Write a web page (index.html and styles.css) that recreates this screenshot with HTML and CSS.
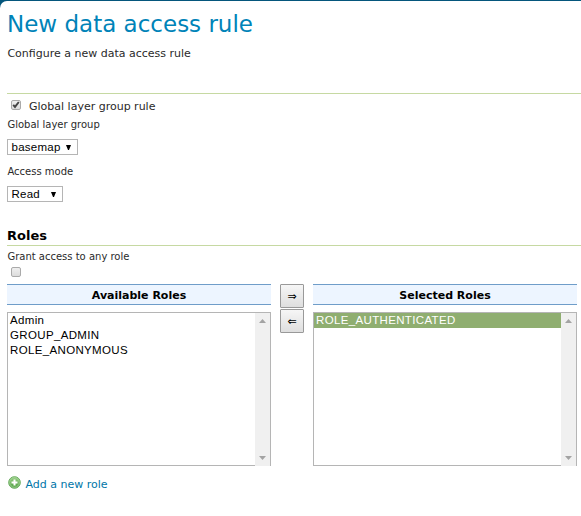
FILE: index.html
```html
<!DOCTYPE html>
<html lang="en">
<head>
<meta charset="utf-8">
<title>New data access rule</title>
<link rel="stylesheet" href="styles.css">
</head>
<body>
<main class="page">
  <header class="page-header">
    <h1>New data access rule</h1>
    <p>Configure a new data access rule</p>
  </header>
  <form class="rule-form">
    <label class="check-row">
      <span class="checkbox"><svg width="10" height="10" viewBox="0 0 10 10"><path d="M2.2 4.8 4 6.9 7.8 2" fill="none" stroke="#444" stroke-width="1.9"/></svg></span>
      <span class="check-text">Global layer group rule</span>
    </label>
    <div class="label">Global layer group</div>
    <div class="select basemap"><span>basemap</span><svg width="5" height="5" viewBox="0 0 5 5"><path d="M0 0h5L3 5H2z"/></svg></div>
    <div class="label">Access mode</div>
    <div class="select mode"><span>Read</span><svg width="5" height="5" viewBox="0 0 5 5"><path d="M0 0h5L3 5H2z"/></svg></div>
    <h2>Roles</h2>
    <div class="label grant">Grant access to any role</div>
    <span class="checkbox any-role"></span>
    <div class="palette">
      <section class="roles">
        <h3>Available Roles</h3>
        <div class="listbox">
          <ul><li>Admin</li><li>GROUP_ADMIN</li><li>ROLE_ANONYMOUS</li></ul>
          <div class="scrollbar"><svg width="7" height="4" viewBox="0 0 7 4"><path d="M0 4 3.5 0 7 4z"/></svg><svg width="7" height="4" viewBox="0 0 7 4"><path d="M0 0h7L3.5 4z"/></svg></div>
        </div>
      </section>
      <div class="movers"><button type="button">⇒</button><button type="button">⇐</button></div>
      <section class="roles">
        <h3>Selected Roles</h3>
        <div class="listbox">
          <ul><li class="selected">ROLE_AUTHENTICATED</li></ul>
          <div class="scrollbar"><svg width="7" height="4" viewBox="0 0 7 4"><path d="M0 4 3.5 0 7 4z"/></svg><svg width="7" height="4" viewBox="0 0 7 4"><path d="M0 0h7L3.5 4z"/></svg></div>
        </div>
      </section>
    </div>
    <a class="add-role"><svg width="13" height="13" viewBox="0 0 13 13"><defs><linearGradient id="g" x2="0" y2="1"><stop stop-color="#9bd086"/><stop offset="1" stop-color="#4d9c40"/></linearGradient></defs><circle cx="6.5" cy="6.5" r="5.8" fill="url(#g)" stroke="#65a95a"/><circle cx="6.5" cy="6.5" r="4.8" fill="none" stroke="#a6d79a" stroke-width=".8"/><path d="M6.5 3.5v6M3.5 6.5h6" stroke="#fff" stroke-width="2"/></svg><span>Add a new role</span></a>
  </form>
</main>
</body>
</html>
```
FILE: styles.css
```css
* { box-sizing: border-box; }
body {
  margin: 0;
  background: #04567c;
  color: #2a2a2a;
  font: 11px/16px "DejaVu Sans", sans-serif;
}
.page {
  margin-top: 1px;
  height: 515px;
  padding-left: 7px;
  background: #fff;
  border-top-left-radius: 7px;
  overflow: hidden;
}
.page-header { height: 93px; border-bottom: 1px solid #c6d9a2; }
h1 {
  margin: 0;
  padding-top: 7px;
  color: #0083b8;
  font-size: 23px;
  font-weight: 400;
  line-height: 32px;
}
p { margin: 6px 0 0; padding-left: .4px; }
.check-row { display: flex; height: 23px; padding: 4px 0 3px; }
.checkbox {
  display: block;
  width: 10px;
  height: 10px;
  margin: 2px 0 0 4px;
  border: 1px solid #aaa;
  border-radius: 2px;
  background: linear-gradient(#efefef, #dcdcdc);
}
.checkbox svg { display: block; margin: -1px; }
.check-text { margin: 1px 0 0 8px; }
.label { padding-left: .4px; font-size: 10px; line-height: 16px; }
.select {
  display: flex;
  align-items: center;
  justify-content: space-between;
  height: 16px;
  padding: 0 6px 0 3.5px;
  border: 1px solid #b5b5b5;
  color: #000;
  font: 11.5px/14px "Liberation Sans", sans-serif;
  letter-spacing: .25px;
}
.basemap { width: 71px; margin: 6px 0 9px; }
.mode { width: 56px; margin: 6px 0 24px; }
h2 {
  margin: 0;
  height: 20px;
  border-bottom: 1px solid #c6d9a2;
  color: #000;
  font-size: 13px;
  line-height: 20px;
}
.grant { margin-top: 3px; }
.any-role { margin-top: 2px; }
.palette { display: flex; gap: 9px; margin-top: 7px; }
.roles { width: 264px; }
h3 {
  margin: 0;
  height: 21px;
  padding-top: 1px;
  border: solid #6f9dc9;
  border-width: 1px 0;
  background: #edf5ff;
  color: #000;
  font-size: 11px;
  line-height: 20px;
  text-align: center;
}
.listbox {
  display: flex;
  height: 154px;
  margin-top: 7px;
  border: 1px solid #b5b5b5;
  font: 11.5px/15px "Liberation Sans", sans-serif;
  letter-spacing: .35px;
  color: #000;
}
ul { flex: 1; margin: 0; padding: 0; list-style: none; }
li { height: 15px; padding-left: 2px; }
.selected { background: #8fae70; color: #fff; }
.scrollbar {
  display: flex;
  flex-direction: column;
  align-items: center;
  justify-content: space-between;
  width: 15px;
  margin-bottom: -1px;
  padding: 6px 0;
  background: #f0f0f0;
  fill: #a3a3a3;
}
.movers { width: 24px; }
button {
  display: block;
  width: 24px;
  height: 24px;
  margin: 0 0 1px;
  padding: 1px 0 0;
  border: 1px solid #999;
  border-radius: 1px;
  background: linear-gradient(#f6f6f6, #dedede);
  color: #000;
  font: 11px/20px "DejaVu Sans", sans-serif;
}
.add-role { display: flex; gap: 5px; margin-top: 10px; padding-left: .5px; color: #0076a8; }
.add-role span { padding-top: 1px; }
```
